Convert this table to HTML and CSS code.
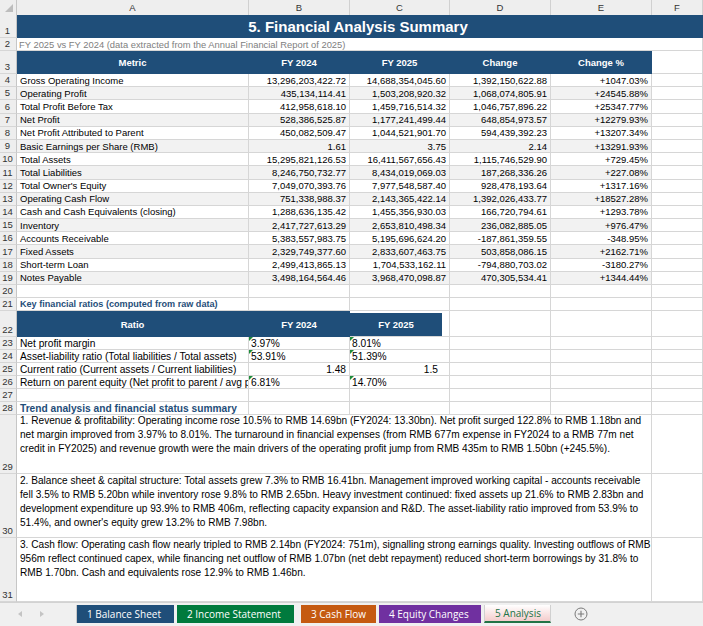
FILE: index.html
```html
<!DOCTYPE html>
<html>
<head>
<meta charset="utf-8">
<title>5. Financial Analysis Summary</title>
<link rel="stylesheet" href="styles.css">
</head>
<body>
<div class="sheet">
  <div class="row hdr">
    <div class="corner"><svg width="17" height="15" viewBox="0 0 17 15"><polygon points="13,4 13,12 5,12" fill="#bdbdbd"/></svg></div>
    <div class="colh">A</div><div class="colh">B</div><div class="colh">C</div><div class="colh">D</div><div class="colh">E</div><div class="colh">F</div>
  </div>

  <div class="row r-title">
    <div class="rn">1</div>
    <div class="c title">5. Financial Analysis Summary</div>
  </div>

  <div class="row">
    <div class="rn">2</div>
    <div class="c sub">FY 2025 vs FY 2024 (data extracted from the Annual Financial Report of 2025)</div>
  </div>

  <div class="row r-head">
    <div class="rn">3</div>
    <div class="c th">Metric</div><div class="c th">FY 2024</div><div class="c th">FY 2025</div><div class="c th">Change</div><div class="c th">Change %</div><div class="c"></div>
  </div>

  <div class="row data"><div class="rn">4</div><div class="c lbl">Gross Operating Income</div><div class="c num">13,296,203,422.72</div><div class="c num">14,688,354,045.60</div><div class="c num">1,392,150,622.88</div><div class="c num">+1047.03%</div><div class="c"></div></div>
  <div class="row data alt"><div class="rn">5</div><div class="c lbl">Operating Profit</div><div class="c num">435,134,114.41</div><div class="c num">1,503,208,920.32</div><div class="c num">1,068,074,805.91</div><div class="c num">+24545.88%</div><div class="c"></div></div>
  <div class="row data"><div class="rn">6</div><div class="c lbl">Total Profit Before Tax</div><div class="c num">412,958,618.10</div><div class="c num">1,459,716,514.32</div><div class="c num">1,046,757,896.22</div><div class="c num">+25347.77%</div><div class="c"></div></div>
  <div class="row data alt"><div class="rn">7</div><div class="c lbl">Net Profit</div><div class="c num">528,386,525.87</div><div class="c num">1,177,241,499.44</div><div class="c num">648,854,973.57</div><div class="c num">+12279.93%</div><div class="c"></div></div>
  <div class="row data"><div class="rn">8</div><div class="c lbl">Net Profit Attributed to Parent</div><div class="c num">450,082,509.47</div><div class="c num">1,044,521,901.70</div><div class="c num">594,439,392.23</div><div class="c num">+13207.34%</div><div class="c"></div></div>
  <div class="row data alt"><div class="rn">9</div><div class="c lbl">Basic Earnings per Share (RMB)</div><div class="c num">1.61</div><div class="c num">3.75</div><div class="c num">2.14</div><div class="c num">+13291.93%</div><div class="c"></div></div>
  <div class="row data"><div class="rn">10</div><div class="c lbl">Total Assets</div><div class="c num">15,295,821,126.53</div><div class="c num">16,411,567,656.43</div><div class="c num">1,115,746,529.90</div><div class="c num">+729.45%</div><div class="c"></div></div>
  <div class="row data alt"><div class="rn">11</div><div class="c lbl">Total Liabilities</div><div class="c num">8,246,750,732.77</div><div class="c num">8,434,019,069.03</div><div class="c num">187,268,336.26</div><div class="c num">+227.08%</div><div class="c"></div></div>
  <div class="row data"><div class="rn">12</div><div class="c lbl">Total Owner's Equity</div><div class="c num">7,049,070,393.76</div><div class="c num">7,977,548,587.40</div><div class="c num">928,478,193.64</div><div class="c num">+1317.16%</div><div class="c"></div></div>
  <div class="row data alt"><div class="rn">13</div><div class="c lbl">Operating Cash Flow</div><div class="c num">751,338,988.37</div><div class="c num">2,143,365,422.14</div><div class="c num">1,392,026,433.77</div><div class="c num">+18527.28%</div><div class="c"></div></div>
  <div class="row data"><div class="rn">14</div><div class="c lbl">Cash and Cash Equivalents (closing)</div><div class="c num">1,288,636,135.42</div><div class="c num">1,455,356,930.03</div><div class="c num">166,720,794.61</div><div class="c num">+1293.78%</div><div class="c"></div></div>
  <div class="row data alt"><div class="rn">15</div><div class="c lbl">Inventory</div><div class="c num">2,417,727,613.29</div><div class="c num">2,653,810,498.34</div><div class="c num">236,082,885.05</div><div class="c num">+976.47%</div><div class="c"></div></div>
  <div class="row data"><div class="rn">16</div><div class="c lbl">Accounts Receivable</div><div class="c num">5,383,557,983.75</div><div class="c num">5,195,696,624.20</div><div class="c num">-187,861,359.55</div><div class="c num">-348.95%</div><div class="c"></div></div>
  <div class="row data alt"><div class="rn">17</div><div class="c lbl">Fixed Assets</div><div class="c num">2,329,749,377.60</div><div class="c num">2,833,607,463.75</div><div class="c num">503,858,086.15</div><div class="c num">+2162.71%</div><div class="c"></div></div>
  <div class="row data"><div class="rn">18</div><div class="c lbl">Short-term Loan</div><div class="c num">2,499,413,865.13</div><div class="c num">1,704,533,162.11</div><div class="c num">-794,880,703.02</div><div class="c num">-3180.27%</div><div class="c"></div></div>
  <div class="row data alt"><div class="rn">19</div><div class="c lbl">Notes Payable</div><div class="c num">3,498,164,564.46</div><div class="c num">3,968,470,098.87</div><div class="c num">470,305,534.41</div><div class="c num">+1344.44%</div><div class="c"></div></div>

  <div class="row"><div class="rn">20</div><div class="c"></div><div class="c"></div><div class="c"></div><div class="c"></div><div class="c"></div><div class="c"></div></div>

  <div class="row"><div class="rn">21</div><div class="c sect s21">Key financial ratios (computed from raw data)</div><div class="c"></div><div class="c"></div><div class="c"></div><div class="c"></div><div class="c"></div></div>

  <div class="row r-rhead">
    <div class="rn">22</div>
    <div class="c th">Ratio</div><div class="c th">FY 2024</div><div class="c th th-short"><span>FY 2025</span></div><div class="c"></div><div class="c"></div><div class="c"></div>
  </div>

  <div class="row ratio"><div class="rn">23</div><div class="c rl">Net profit margin</div><div class="c rv flag">3.97%</div><div class="c rv flag">8.01%</div><div class="c"></div><div class="c"></div><div class="c"></div></div>
  <div class="row ratio"><div class="rn">24</div><div class="c rl">Asset-liability ratio (Total liabilities / Total assets)</div><div class="c rv flag">53.91%</div><div class="c rv flag">51.39%</div><div class="c"></div><div class="c"></div><div class="c"></div></div>
  <div class="row ratio"><div class="rn">25</div><div class="c rl">Current ratio (Current assets / Current liabilities)</div><div class="c rn-num">1.48</div><div class="c rn-num rn-c">1.5</div><div class="c"></div><div class="c"></div><div class="c"></div></div>
  <div class="row ratio"><div class="rn">26</div><div class="c rl">Return on parent equity (Net profit to parent / avg parent equity)</div><div class="c rv flag">6.81%</div><div class="c rv flag">14.70%</div><div class="c"></div><div class="c"></div><div class="c"></div></div>

  <div class="row"><div class="rn">27</div><div class="c"></div><div class="c"></div><div class="c"></div><div class="c"></div><div class="c"></div><div class="c"></div></div>

  <div class="row"><div class="rn">28</div><div class="c sect s28">Trend analysis and financial status summary</div><div class="c"></div><div class="c"></div><div class="c"></div><div class="c"></div><div class="c"></div></div>

  <div class="row r29">
    <div class="rn">29</div>
    <div class="c para">1. Revenue &amp; profitability: Operating income rose 10.5% to RMB 14.69bn (FY2024: 13.30bn). Net profit surged 122.8% to RMB 1.18bn and<br>net margin improved from 3.97% to 8.01%. The turnaround in financial expenses (from RMB 677m expense in FY2024 to a RMB 77m net<br>credit in FY2025) and revenue growth were the main drivers of the operating profit jump from RMB 435m to RMB 1.50bn (+245.5%).</div>
    <div class="c"></div>
  </div>
  <div class="row r30">
    <div class="rn">30</div>
    <div class="c para">2. Balance sheet &amp; capital structure: Total assets grew 7.3% to RMB 16.41bn. Management improved working capital - accounts receivable<br>fell 3.5% to RMB 5.20bn while inventory rose 9.8% to RMB 2.65bn. Heavy investment continued: fixed assets up 21.6% to RMB 2.83bn and<br>development expenditure up 93.9% to RMB 406m, reflecting capacity expansion and R&amp;D. The asset-liability ratio improved from 53.9% to<br>51.4%, and owner's equity grew 13.2% to RMB 7.98bn.</div>
    <div class="c"></div>
  </div>
  <div class="row r31">
    <div class="rn">31</div>
    <div class="c para">3. Cash flow: Operating cash flow nearly tripled to RMB 2.14bn (FY2024: 751m), signalling strong earnings quality. Investing outflows of RMB<br>956m reflect continued capex, while financing net outflow of RMB 1.07bn (net debt repayment) reduced short-term borrowings by 31.8% to<br>RMB 1.70bn. Cash and equivalents rose 12.9% to RMB 1.46bn.</div>
    <div class="c"></div>
  </div>
</div>

<div class="tabbar">
  <div class="nav">
    <svg width="8" height="8" viewBox="0 0 8 8"><polygon points="6,1 6,7 2,4" fill="#c4c4c4"/></svg>
    <svg width="8" height="8" viewBox="0 0 8 8"><polygon points="2,1 2,7 6,4" fill="#c4c4c4"/></svg>
  </div>
  <div class="tabs">
    <div class="tab t1">1 Balance Sheet</div>
    <div class="tab t2">2 Income Statement</div>
    <div class="tab t3">3 Cash Flow</div>
    <div class="tab t4">4 Equity Changes</div>
    <div class="tab t5">5 Analysis</div>
  </div>
  <div class="add">
    <svg width="14" height="14" viewBox="0 0 14 14"><circle cx="7" cy="7" r="6" fill="none" stroke="#7a7a7a" stroke-width="1"/><path d="M7 3.8V10.2M3.8 7H10.2" stroke="#7a7a7a" stroke-width="1.1"/></svg>
  </div>
</div>
</body>
</html>
```

FILE: styles.css
```css
* { box-sizing: border-box; }
html, body { margin: 0; padding: 0; }
body {
  width: 703px;
  height: 626px;
  overflow: hidden;
  background: #ffffff;
  font-family: "Liberation Sans", Arial, sans-serif;
  font-size: 9.5px;
  color: #000;
}

.sheet {
  display: flex;
  flex-direction: column;
  height: 602px;
  overflow: hidden;
}

.row {
  display: grid;
  grid-template-columns: 17px 232px 101px 100px 101px 101px 51px;
  height: 13px;
  flex: none;
}
.row.data { height: 13.2px; }

.c {
  border-right: 1px solid #d6d6d6;
  border-bottom: 1px solid #d6d6d6;
  overflow: hidden;
  white-space: nowrap;
  display: flex;
  align-items: center;
  padding: 0 3px;
  min-width: 0;
  position: relative;
}

.rn {
  background: #eeeeee;
  border-right: 1px solid #c6c6c6;
  border-bottom: 1px solid #d6d6d6;
  color: #333;
  display: flex;
  align-items: flex-end;
  justify-content: center;
  font-size: 9.5px;
  line-height: 12px;
  padding-right: 1px;
}

/* column header */
.hdr { height: 15px; }
.corner {
  background: #eeeeee;
  border-right: 1px solid #c6c6c6;
  border-bottom: 1px solid #bdbdbd;
}
.corner svg { display: block; }
.colh {
  background: #eeeeee;
  border-right: 1px solid #d0d0d0;
  border-bottom: 1px solid #bdbdbd;
  display: flex;
  align-items: center;
  justify-content: center;
  color: #333;
  font-size: 9.5px;
}

/* title */
.r-title { height: 23px; }
.title {
  grid-column: 2 / 8;
  background: #1f4e79;
  border-color: #1f4e79;
  color: #ffffff;
  font-weight: bold;
  font-size: 15px;
  justify-content: center;
  padding-left: 0;
}

.sub {
  grid-column: 2 / 8;
  color: #808080;
  padding-left: 2px;
  font-size: 9.4px;
}

.r-head { height: 23px; }
.th {
  background: #1f4e79;
  border-color: #1f4e79;
  color: #ffffff;
  font-weight: bold;
  justify-content: center;
}

.lbl { padding-left: 3px; }
.num { justify-content: flex-end; padding-right: 3px; }

.alt .lbl, .alt .num { background: #f2f2f2; }

/* ratio section */
.sect {
  color: #1f4e79;
  font-weight: bold;
  overflow: visible;
}
.s21 { font-size: 9.1px; }
.s28 { font-size: 10.2px; }

.r-rhead { height: 26px; }
.r-rhead .th { padding-top: 2px; }
.th-short {
  background: transparent;
  border-color: #d6d6d6;
  padding: 0;
  justify-content: flex-start;
}
.th-short span {
  display: flex;
  align-items: center;
  justify-content: center;
  background: #1f4e79;
  width: 92px;
  height: 100%;
}

.ratio .rl { font-size: 10.2px; padding-left: 3px; }
.ratio .rv { font-size: 10.2px; padding-left: 2px; }
.flag::before {
  content: "";
  position: absolute;
  left: 0;
  top: 0;
  border-top: 4px solid #1e8c3a;
  border-right: 4px solid transparent;
}
.rn-num { justify-content: flex-end; font-size: 10.2px; padding-right: 3px; }
.rn-c { padding-right: 11px; }

/* paragraphs */
.r29 { height: 59px; }
.r30 { height: 64px; }
.r31 { height: 64px; }
.para {
  grid-column: 2 / 7;
  white-space: nowrap;
  font-size: 10.1px;
  line-height: 13.9px;
  padding: 0 3px;
  display: block;
}
.r29 .para { padding-top: 0; margin-top: -1px; }

/* tab bar */
.tabbar {
  height: 24px;
  background: #f0f0f0;
  border-top: 1px solid #d2d2d2;
  display: flex;
  align-items: flex-start;
  font-family: "Open Sans", "Noto Sans", sans-serif;
  font-size: 10px;
}
.nav {
  width: 77px;
  height: 18px;
  margin-top: 2px;
  display: flex;
  align-items: center;
  gap: 14px;
  padding-left: 16px;
  border-right: 1px solid #c8c8c8;
}
.nav svg { display: block; }
.tabs {
  display: flex;
  gap: 3px;
  margin-top: 2px;
}
.tab {
  height: 18px;
  display: flex;
  align-items: center;
  padding: 0 10px;
  color: #ffffff;
  white-space: nowrap;
}
.t1 { background: #1f4e79; width: 97px; }
.t2 { background: #007a3d; width: 117px; }
.t3 { background: #c55a11; width: 75px; margin-left: 4px; }
.t4 { background: #7030a0; width: 102px; }
.t5 {
  background: linear-gradient(#ffffff, #f4cccc);
  color: #217346;
  border-left: 1px solid #d0d0d0;
  border-right: 1px solid #d0d0d0;
  border-bottom: 2px solid #217346;
  width: 67px;
}
.add {
  margin-left: 23px;
  margin-top: 4px;
}
.add svg { display: block; }
```
